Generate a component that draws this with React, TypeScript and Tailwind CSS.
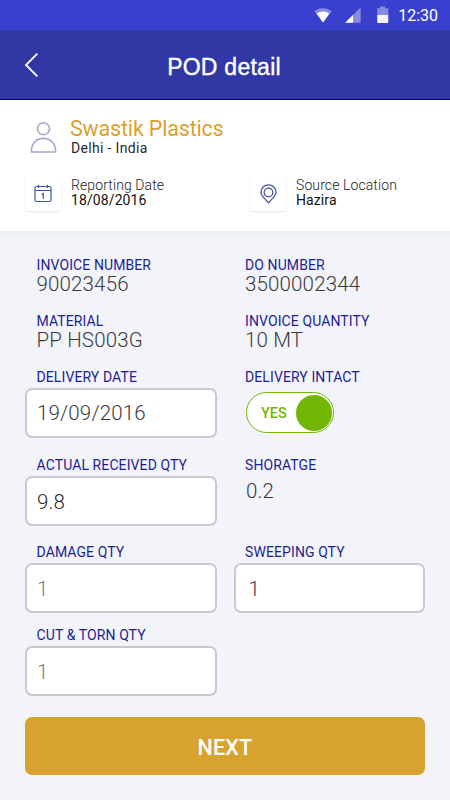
import { useState } from 'react';
import type { ReactNode } from 'react';

interface FieldProps {
  label: string;
  children: ReactNode;
}

// Label with its value or control below
function Field({ label, children }: FieldProps) {
  return (
    <div>
      <div className="pl-[11.5px] h-[19px] text-sm leading-4 tracking-[0.1px] text-[#1e1e92] whitespace-nowrap">
        {label}
      </div>
      {children}
    </div>
  );
}

function Value({ children, className = '' }: { children: ReactNode; className?: string }) {
  return (
    <div className={`pl-[11.5px] -mt-[3px] text-[20.5px] leading-[22px] tracking-[0.15px] font-light text-[#3a3a3e] ${className}`}>
      {children}
    </div>
  );
}

interface InputProps {
  initial: string;
  label: string;
  className?: string;
}

function TextInput({ initial, label, className = '' }: InputProps) {
  const [value, setValue] = useState(initial);

  return (
    <input
      aria-label={label}
      value={value}
      onChange={(e) => setValue(e.target.value)}
      className={`block w-full h-[50px] rounded-[7px] border-2 border-[#c8c8cd] bg-white text-[20.5px] tracking-[0.15px] font-light outline-none ${className}`}
    />
  );
}

function StatusBar() {
  return (
    <div className="h-[30px] bg-[#3940ce] flex items-center justify-end pr-3 text-white">
      <svg width="18" height="16" viewBox="0 0 18 16" className="mr-[13px]">
        <path d="M0.3 4.2C5.4 0.1 12.6 0.1 17.7 4.2L9 15.5Z" fill="#fff" opacity="0.4" />
        <path d="M2.7 6.6C6.4 3.7 11.6 3.7 15.3 6.6L9 15.5Z" fill="#fff" />
      </svg>
      <svg width="16" height="16" viewBox="0 0 16 16" className="mr-4">
        <path d="M0.3 15.8L15.6 0.4V15.8Z" fill="#fff" opacity="0.4" />
        <path d="M0.3 15.8L8 8V15.8Z" fill="#fff" />
      </svg>
      <svg width="12" height="18" viewBox="0 0 12 18" className="mr-[9px]">
        <path d="M3.2 0.5h5v1.8H11.3V9H0.2V2.3H3.2Z" fill="#fff" opacity="0.4" />
        <path d="M0.2 9H11.3V16a1 1 0 0 1-1 1H1.2a1 1 0 0 1-1-1Z" fill="#fff" opacity="0.95" />
      </svg>
      <span className="pt-0.5 text-[16px] leading-4">12:30</span>
    </div>
  );
}

function Header() {
  return (
    <div className="h-[70px] bg-[#3138a6] border-b border-[#04047a] flex items-center text-white">
      <button className="ml-6" aria-label="Back">
        <svg width="15" height="26" viewBox="0 0 15 26" fill="none" stroke="currentColor" strokeWidth="1.8">
          <path d="M13.3 1.7L2 13L13.3 24.3" />
        </svg>
      </button>
      <h1 className="flex-1 pr-[41px] pt-[5px] text-center text-[23px] tracking-[0.25px] font-['Liberation_Sans',sans-serif] [-webkit-text-stroke:0.4px_white]">
        POD detail
      </h1>
    </div>
  );
}

function InfoCard({ icon, title, value }: { icon: ReactNode; title: string; value: string }) {
  return (
    <div className="flex w-[225px] shrink-0">
      <div className="w-9 h-[35px] rounded-[3px] bg-white shadow-[0_1px_2px_rgba(40,50,90,0.12)] flex items-center justify-center">
        {icon}
      </div>
      <div className="ml-2.5 text-sm leading-[15px] tracking-[0.1px]">
        <div className="mt-0.5 font-light text-[#222]">{title}</div>
        <div className="text-[#15110e]">{value}</div>
      </div>
    </div>
  );
}

function Customer() {
  return (
    <div className="h-[131px] bg-white">
      <div className="flex pl-[30px] pt-[17px] h-[76px]">
        <svg width="27" height="32" viewBox="0 0 27 32" fill="none" stroke="#a5aace" strokeWidth="1.6" className="mt-[5px]">
          <circle cx="13.5" cy="6.8" r="6" />
          <path d="M1.3 30C1.3 22 5.8 16.4 13.5 16.4S25.7 22 25.7 30Z" strokeLinejoin="round" />
        </svg>
        <div className="ml-[13px]">
          <div className="text-[21.5px] leading-6 tracking-[-0.18px] text-[#d8a22f]">Swastik Plastics</div>
          <div className="ml-px -mt-px text-sm leading-4 tracking-[0.33px] text-[#2a2a2e]">Delhi - India</div>
        </div>
      </div>
      <div className="flex pl-[25px]">
        <InfoCard
          title="Reporting Date"
          value="18/08/2016"
          icon={
            <svg width="18" height="19" viewBox="0 0 18 19" fill="none" stroke="#3c58a4" strokeWidth="1.2">
              <rect x="1" y="2.5" width="16" height="15" rx="1.5" />
              <path d="M1 6.5H17M4.5 0.7V4M13.5 0.7V4M7.7 10.7L9.3 9.5V15" />
            </svg>
          }
        />
        <InfoCard
          title="Source Location"
          value="Hazira"
          icon={
            <svg width="17" height="20" viewBox="0 0 17 20" fill="none" stroke="#4653a5" strokeWidth="1.3">
              <path d="M8.5 18.8C6.5 16.2 1 12.2 1 8.2a7.5 7.3 0 0 1 15 0C16 12.2 10.5 16.2 8.5 18.8Z" />
              <circle cx="8.5" cy="8.5" r="4.3" />
            </svg>
          }
        />
      </div>
    </div>
  );
}

function IntactSwitch() {
  const [on, setOn] = useState(true);

  return (
    <button
      role="switch"
      aria-checked={on}
      onClick={() => setOn(!on)}
      className={`ml-[12.5px] mt-1 w-[88px] h-[41px] rounded-full border-[1.5px] border-[#72b606] bg-white flex items-center justify-between pl-3.5 pr-px ${on ? '' : 'flex-row-reverse'}`}
    >
      <span className="pt-0.5 text-[14.5px] leading-4 font-medium text-[#72b606]">{on ? 'YES' : 'NO'}</span>
      <span className="size-9 rounded-full bg-[#72b606]" />
    </button>
  );
}

export default function App() {
  return (
    <div className="w-[450px] h-[800px] overflow-hidden bg-[#f2f4f9] font-['Roboto',sans-serif]">
      <StatusBar />
      <Header />
      <Customer />

      <div className="h-[569px] px-[25px] pt-[26px] bg-linear-to-b from-[#e9edf6] to-[#f2f4f9] to-[5px]">
        <div className="grid grid-cols-2 gap-x-[17px] grid-rows-[56px_56px_88px_87px_83px_90px]">
          <Field label="INVOICE NUMBER">
            <Value>90023456</Value>
          </Field>
          <Field label="DO NUMBER">
            <Value>3500002344</Value>
          </Field>

          <Field label="MATERIAL">
            <Value>PP HS003G</Value>
          </Field>
          <Field label="INVOICE QUANTITY">
            <Value>10 MT</Value>
          </Field>

          <Field label="DELIVERY DATE">
            <TextInput label="Delivery date" initial="19/09/2016" className="pl-[10px] text-[#3a3a3e]" />
          </Field>
          <Field label="DELIVERY INTACT">
            <IntactSwitch />
          </Field>

          <Field label="ACTUAL RECEIVED QTY">
            <TextInput label="Actual received qty" initial="9.8" className="pl-[10px] pt-0.5 text-[#2a2a2e]" />
          </Field>
          <Field label="SHORATGE">
            <Value className="ml-px pt-[7px]">0.2</Value>
          </Field>

          <Field label="DAMAGE QTY">
            <TextInput label="Damage qty" initial="1" className="pl-[10px] pt-0.5 text-[#77777b]" />
          </Field>
          <Field label="SWEEPING QTY">
            <TextInput label="Sweeping qty" initial="1" className="pl-[13px] pt-0.5 text-[#3a3a3e]" />
          </Field>

          <Field label="CUT &amp; TORN QTY">
            <TextInput label="Cut and torn qty" initial="1" className="pl-[10px] pt-0.5 text-[#77777b]" />
          </Field>
        </div>

        <button className="block w-full h-[58px] rounded-[7px] bg-[#d8a22f] pt-1 text-[21.5px] tracking-[0.2px] font-medium text-white">
          NEXT
        </button>
      </div>
    </div>
  );
}
